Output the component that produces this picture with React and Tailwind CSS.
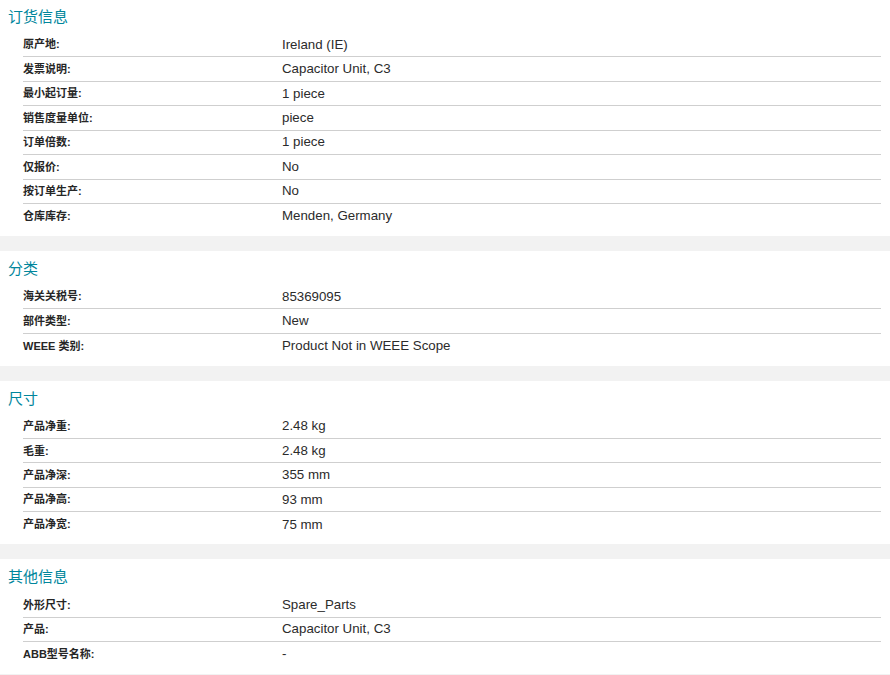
const sections = [
  {
    title: '订货信息',
    rows: [
      ['原产地:', 'Ireland (IE)'],
      ['发票说明:', 'Capacitor Unit, C3'],
      ['最小起订量:', '1 piece'],
      ['销售度量单位:', 'piece'],
      ['订单倍数:', '1 piece'],
      ['仅报价:', 'No'],
      ['按订单生产:', 'No'],
      ['仓库库存:', 'Menden, Germany'],
    ],
  },
  {
    title: '分类',
    rows: [
      ['海关关税号:', '85369095'],
      ['部件类型:', 'New'],
      ['WEEE 类别:', 'Product Not in WEEE Scope'],
    ],
  },
  {
    title: '尺寸',
    rows: [
      ['产品净重:', '2.48 kg'],
      ['毛重:', '2.48 kg'],
      ['产品净深:', '355 mm'],
      ['产品净高:', '93 mm'],
      ['产品净宽:', '75 mm'],
    ],
  },
  {
    title: '其他信息',
    rows: [
      ['外形尺寸:', 'Spare_Parts'],
      ['产品:', 'Capacitor Unit, C3'],
      ['ABB型号名称:', '-'],
    ],
  },
];

const font = { fontFamily: '"Liberation Sans", Arial, "Noto Sans CJK SC", sans-serif' };

function Section({ title, rows, first }) {
  return (
    <div className={(first ? 'pt-[7px]' : 'pt-[8px]') + ' pb-[7.5px]'}>
      <h2 className="pl-[8px] text-[15px] leading-[20px] font-normal text-[#00869c] mb-[6px]">{title}</h2>
      <div className="pl-[23px] pr-[9px]">
        {rows.map(([label, value], i) => (
          <div
            key={label}
            className={
              'flex items-center h-[24.43px] box-border ' +
              (i < rows.length - 1 ? 'border-b border-[#cfcfcf]' : '')
            }
          >
            <div className="w-[259px] shrink-0 text-[11px] font-bold text-[#262626]">{label}</div>
            <div className="text-[13.3px] text-[#2b2b2b]">{value}</div>
          </div>
        ))}
      </div>
    </div>
  );
}

export default function App() {
  return (
    <div className="w-[890px] bg-white" style={font}>
      {sections.map((s, i) => (
        <div key={s.title}>
          <Section title={s.title} rows={s.rows} first={i === 0} />
          <div className="h-[15px] bg-[#f2f2f2]" />
        </div>
      ))}
    </div>
  );
}
